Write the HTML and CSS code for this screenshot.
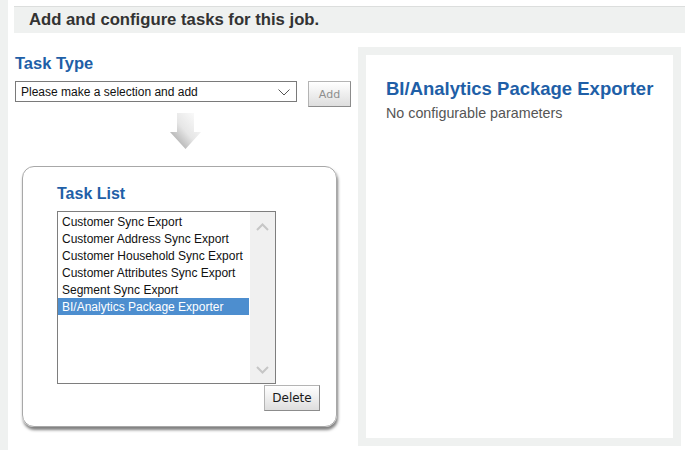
FILE: index.html
```html
<!DOCTYPE html>
<html>
<head>
<meta charset="utf-8">
<link rel="stylesheet" href="styles.css">
</head>
<body>
<div class="page">
  <div class="rail"></div>
  <div class="main">
    <div class="header">Add and configure tasks for this job.</div>
    <div class="content">
      <div class="left">
        <h2 class="type-title">Task Type</h2>
        <div class="type-row">
          <div class="select">
            <span>Please make a selection and add</span>
            <svg class="chev" width="12" height="7" viewBox="0 0 12 7"><path d="M0.5 0.5 L6 6 L11.5 0.5" fill="none" stroke="#555" stroke-width="1"/></svg>
          </div>
          <button class="btn btn-disabled">Add</button>
        </div>
        <svg class="arrow" width="31" height="36" viewBox="0 0 31 36">
          <defs>
            <linearGradient id="ag" x1="1" y1="0" x2="0" y2="1">
              <stop offset="0" stop-color="#ffffff"/>
              <stop offset="0.5" stop-color="#e6e6e6"/>
              <stop offset="1" stop-color="#959595"/>
            </linearGradient>
          </defs>
          <path d="M7 0 H24 V19 H31 L15.5 36 L0 19 H7 Z" fill="url(#ag)"/>
        </svg>
        <div class="card">
          <h2 class="list-title">Task List</h2>
          <div class="listbox">
            <ul class="items">
              <li>Customer Sync Export</li>
              <li>Customer Address Sync Export</li>
              <li>Customer Household Sync Export</li>
              <li>Customer Attributes Sync Export</li>
              <li>Segment Sync Export</li>
              <li class="selected">BI/Analytics Package Exporter</li>
            </ul>
            <div class="scrollbar">
              <svg width="13" height="8" viewBox="0 0 13 8"><path d="M1 7 L6.5 1.5 L12 7" fill="none" stroke="#c6c6c6" stroke-width="2"/></svg>
              <svg width="13" height="8" viewBox="0 0 13 8"><path d="M1 1 L6.5 6.5 L12 1" fill="none" stroke="#c6c6c6" stroke-width="2"/></svg>
            </div>
          </div>
          <button class="btn btn-delete">Delete</button>
        </div>
      </div>
      <div class="right">
        <h2 class="detail-title">BI/Analytics Package Exporter</h2>
        <p class="detail-text">No configurable parameters</p>
      </div>
    </div>
  </div>
</div>
</body>
</html>
```
FILE: styles.css
```css
* { box-sizing: border-box; }
html, body { margin: 0; padding: 0; background: #fff; }
body { font-family: "Liberation Sans", Arial, sans-serif; width: 685px; height: 450px; overflow: hidden; }

.page { display: flex; height: 450px; }
.rail { width: 8px; background: #eff1f0; flex: none; }
.main { flex: 1; padding: 6px 0 0 6px; }

.header {
  height: 27px;
  border-top: 1px solid #dcdedd;
  background: #eff1f0;
  color: #333;
  font-weight: bold;
  font-size: 16.7px;
  line-height: 26px;
  padding-left: 15px;
}

.content { display: flex; }
.left { width: 344px; padding-left: 1px; flex: none; }

.type-title {
  margin: 20px 0 0 0;
  font-size: 16.5px;
  line-height: 20px;
  color: #1f5fa7;
  font-weight: bold;
}

.type-row { display: flex; gap: 11px; margin-top: 8px; width: 336px; align-items: flex-start; }
.select {
  width: 282px;
  height: 21px;
  border: 1px solid #7a7a7a;
  display: flex;
  align-items: center;
  justify-content: space-between;
  padding: 0 6px 0 5px;
  font-size: 12px;
  color: #111;
}
.chev { margin-top: 1px; }

.btn {
  font-family: "DejaVu Sans", Tahoma, sans-serif;
  background: linear-gradient(#ffffff, #dedede);
  border: 1px solid #b4b4b4;
  border-right-color: #8c8c8c;
  border-bottom-color: #8c8c8c;
  padding: 0;
  height: 26px;
}
.btn-disabled { width: 43px; font-size: 11px; color: #8e8e8e; }

.arrow { display: block; margin: 6px auto 0 auto; position: relative; left: -1px; width: 31px; }

.card {
  margin: 17px 0 0 7px;
  width: 315px;
  height: 261px;
  border: 1px solid #a8a8a8;
  border-radius: 12px;
  box-shadow: 1px 3px 3px rgba(0,0,0,0.5);
  padding: 17px 16px 0 34px;
  display: flex;
  flex-direction: column;
}
.list-title {
  margin: 0;
  font-size: 16px;
  line-height: 20px;
  color: #1f5fa7;
  font-weight: bold;
}
.listbox {
  margin-top: 7px;
  width: 219px;
  height: 173px;
  border: 1px solid #7e7e7e;
  display: flex;
}
.items { list-style: none; margin: 0; padding: 1px 0 0 0; flex: 1; font-size: 12px; color: #111; }
.items li { height: 17px; line-height: 18px; padding-left: 4px; white-space: nowrap; }
.items li.selected { background: #4d8ecf; color: #fff; margin-right: 1px; }
.scrollbar {
  width: 25px;
  background: #f0f0f0;
  display: flex;
  flex-direction: column;
  justify-content: space-between;
  align-items: center;
  padding: 11px 0 9px 0;
}
.scrollbar svg { display: block; }

.btn-delete { align-self: flex-end; width: 56px; margin-top: 1px; font-size: 12px; color: #1a1a1a; }

.right {
  margin-top: 14px;
  width: 323px;
  height: 399px;
  border: 8px solid #eff1f0;
  padding: 23px 0 0 20px;
}
.detail-title {
  margin: 0;
  font-size: 18.5px;
  line-height: 22px;
  color: #1f5fa7;
  font-weight: bold;
}
.detail-text {
  margin: 5px 0 0 0;
  font-size: 14.3px;
  line-height: 17px;
  color: #555;
}
```
